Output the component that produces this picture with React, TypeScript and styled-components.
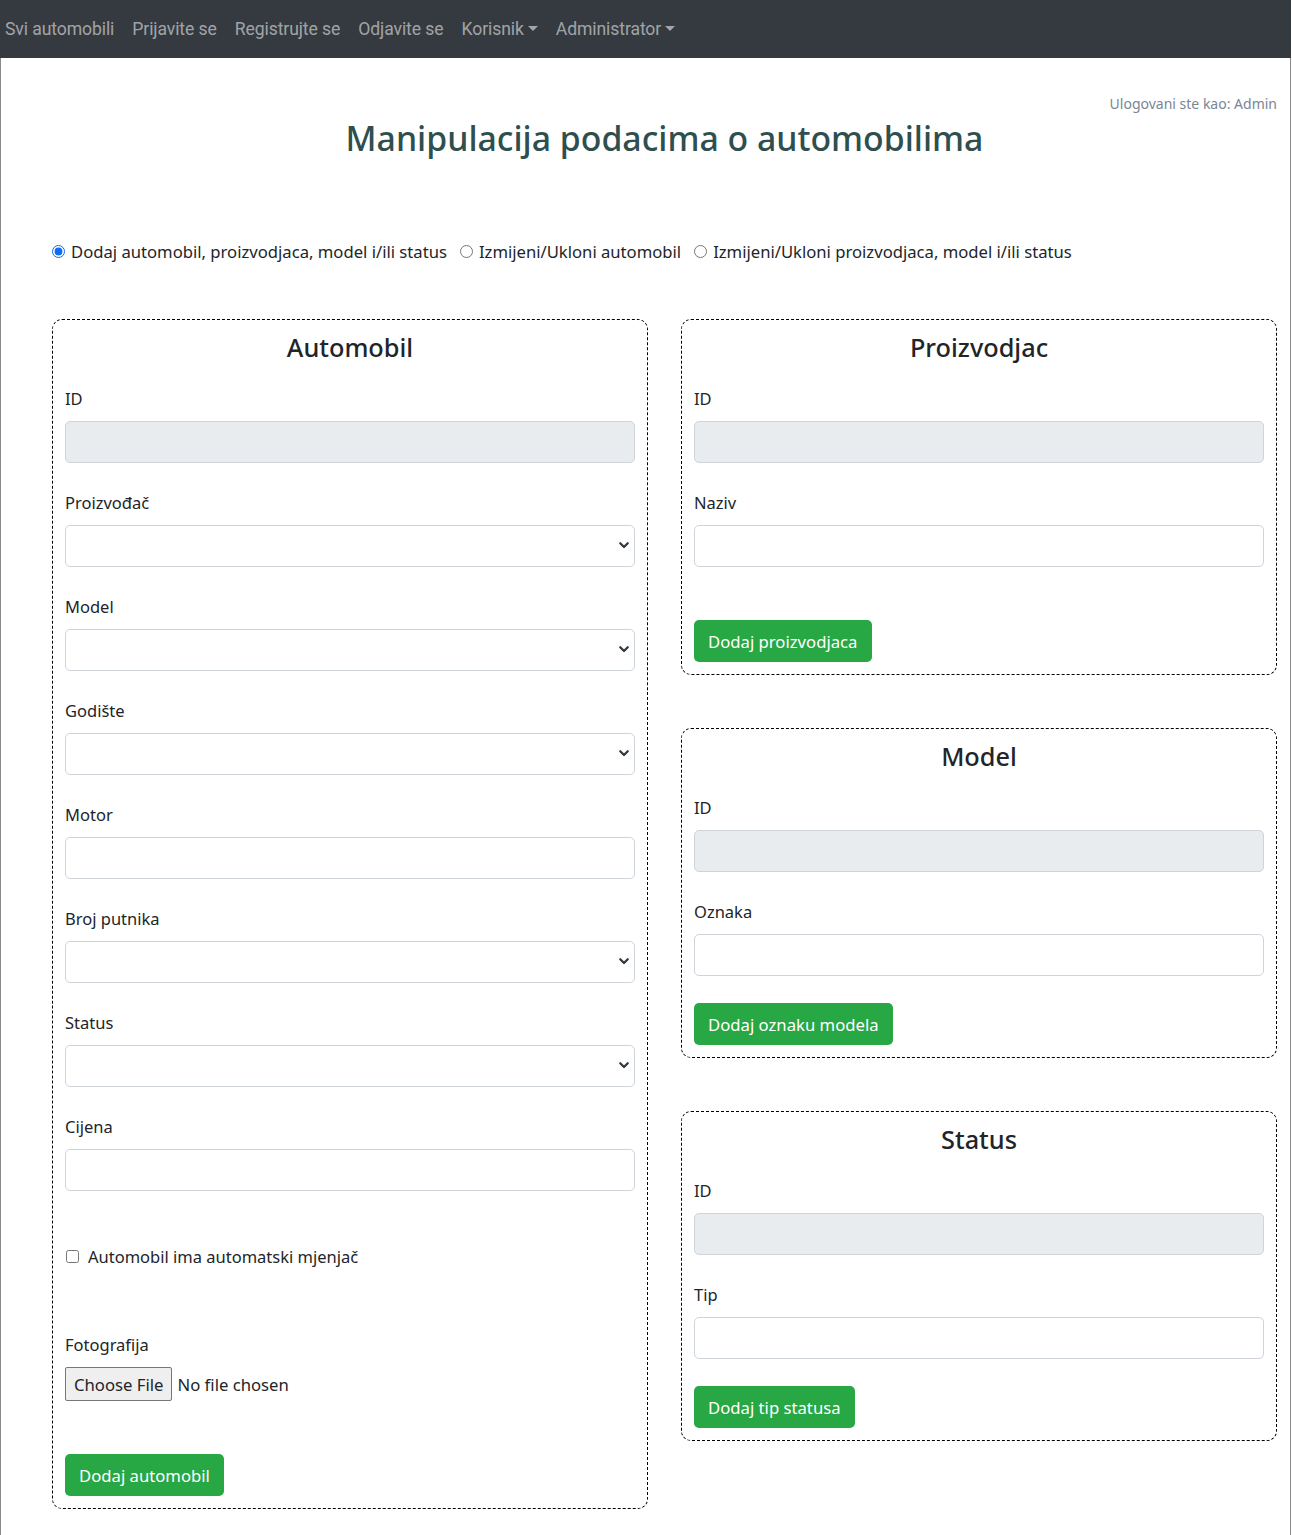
import React from "react";
import styled, { createGlobalStyle } from "styled-components";

const GlobalStyle = createGlobalStyle`
  * { box-sizing: border-box; }
  body {
    margin: 0;
    background: #fff;
    font-family: "Noto Sans", "Open Sans", sans-serif;
    color: #212529;
  }
`;

const Page = styled.div`
  width: 1291px;
  min-height: 1534px;
  display: flex;
  flex-direction: column;
  border-right: 1px solid #8a8a8a;
  border-bottom: 1px solid #8a8a8a;
`;

const NavBar = styled.nav`
  height: 58px;
  flex: none;
  background: #343a40;
  display: flex;
  align-items: center;
  gap: 18px;
  padding-left: 5px;
  margin-right: -1px;
`;

const NavLink = styled.a`
  font-family: Roboto, "Noto Sans", sans-serif;
  font-size: 17.6px;
  letter-spacing: -0.1px;
  color: rgba(255, 255, 255, 0.55);
  text-decoration: none;
  display: flex;
  align-items: center;
  gap: 4px;
`;

const Caret = styled.span`
  display: inline-block;
  width: 0;
  height: 0;
  border-left: 5px solid transparent;
  border-right: 5px solid transparent;
  border-top: 5px solid rgba(255, 255, 255, 0.55);
  margin-top: -2px;
`;

const Main = styled.main`
  flex: 1;
  border-left: 1px solid #8a8a8a;
  padding: 0 13px 26px 51px;
`;

const Header = styled.header`
  display: flex;
  flex-direction: column;
  padding-top: 35px;
`;

const LoggedAs = styled.div`
  align-self: flex-end;
  font-size: 14px;
  line-height: 22px;
  color: #7a8694;
`;

const Title = styled.h1`
  margin: 1px 0 0;
  text-align: center;
  font-size: 33.8px;
  font-weight: 500;
  line-height: 44px;
  color: #2f4f4f;
`;

const RadioRow = styled.div`
  display: flex;
  align-items: center;
  gap: 13px;
  margin-top: 77px;
  height: 28px;
`;

const RadioOption = styled.label`
  display: flex;
  align-items: center;
  gap: 6px;
  font-size: 16.65px;
  color: #212529;
`;

const Radio = styled.input`
  margin: 0;
  width: 13px;
  height: 13px;
  accent-color: #0b6cf5;
`;

const Columns = styled.div`
  display: grid;
  grid-template-columns: 1fr 1fr;
  column-gap: 33px;
  align-items: start;
  margin-top: 54px;
`;

const Stack = styled.div`
  display: flex;
  flex-direction: column;
  gap: 53px;
`;

const Card = styled.section`
  border: 1px dashed #000;
  border-radius: 10px;
  padding: 12px;
`;

const CardTitle = styled.h3`
  margin: 0 0 24px;
  text-align: center;
  font-size: 25.3px;
  font-weight: 500;
  line-height: 30px;
  color: #212529;
`;

const Field = styled.div`
  margin-bottom: 27px;
`;

const Label = styled.label`
  display: block;
  font-size: 16.5px;
  line-height: 26px;
  margin-bottom: 9px;
`;

const TextInput = styled.input`
  display: block;
  width: 100%;
  height: 42px;
  border: 1px solid #ced4da;
  border-radius: 5px;
  background: ${(p) => (p.disabled ? "#e9ecef" : "#fff")};
  font: inherit;
  padding: 6px 12px;
`;

const SelectWrap = styled.div`
  position: relative;
`;

const Select = styled.select`
  display: block;
  width: 100%;
  height: 42px;
  border: 1px solid #ced4da;
  border-radius: 5px;
  background: #fff;
  appearance: none;
  font: inherit;
  padding: 6px 12px;
`;

const Chevron = styled.svg`
  position: absolute;
  right: 5px;
  top: 16px;
  pointer-events: none;
`;

const CheckRow = styled.label`
  display: flex;
  align-items: center;
  gap: 9px;
  font-size: 16.5px;
  line-height: 26px;
  margin: 53px 0 62px;
`;

const Check = styled.input`
  margin: 0 0 2px 1px;
  width: 13px;
  height: 13px;
`;

const FileInput = styled.input`
  display: block;
  font-family: "Noto Sans", sans-serif;
  font-size: 16.7px;
  &::file-selector-button {
    font: inherit;
    height: 34px;
    padding: 0 8px;
    margin-right: 5px;
    border: 1px solid #767676;
    border-radius: 2px;
    background: #efefef;
    color: #212529;
  }
`;

const Button = styled.button<{ $gap?: number }>`
  display: inline-block;
  margin-top: ${(p) => p.$gap ?? 0}px;
  height: 42px;
  padding: 0 14px;
  border: none;
  border-radius: 5px;
  background: #28a745;
  color: #fff;
  font-family: "Noto Sans", sans-serif;
  font-size: 16.7px;
`;

const ChevronIcon = () => (
  <Chevron width="12" height="9" viewBox="0 0 16 12">
    <path d="M3 3l5 5 5-5" fill="none" stroke="#343a40" strokeWidth="3" strokeLinecap="round" strokeLinejoin="round" />
  </Chevron>
);

const InputField = ({ label, disabled }: { label: string; disabled?: boolean }) => (
  <Field>
    <Label>{label}</Label>
    <TextInput type="text" disabled={disabled} />
  </Field>
);

const SelectField = ({ label }: { label: string }) => (
  <Field>
    <Label>{label}</Label>
    <SelectWrap>
      <Select>
        <option></option>
      </Select>
      <ChevronIcon />
    </SelectWrap>
  </Field>
);

const navItems = ["Svi automobili", "Prijavite se", "Registrujte se", "Odjavite se"];

const App: React.FC = () => {
  return (
    <>
      <GlobalStyle />
      <Page>
        <NavBar>
          {navItems.map((n) => (
            <NavLink key={n} href="#">{n}</NavLink>
          ))}
          <NavLink href="#">Korisnik<Caret /></NavLink>
          <NavLink href="#">Administrator<Caret /></NavLink>
        </NavBar>
        <Main>
          <Header>
            <LoggedAs>Ulogovani ste kao: Admin</LoggedAs>
            <Title>Manipulacija podacima o automobilima</Title>
          </Header>

          <RadioRow>
            <RadioOption><Radio type="radio" name="mode" defaultChecked />Dodaj automobil, proizvodjaca, model i/ili status</RadioOption>
            <RadioOption><Radio type="radio" name="mode" />Izmijeni/Ukloni automobil</RadioOption>
            <RadioOption><Radio type="radio" name="mode" />Izmijeni/Ukloni proizvodjaca, model i/ili status</RadioOption>
          </RadioRow>

          <Columns>
            <Card>
              <CardTitle>Automobil</CardTitle>
              <InputField label="ID" disabled />
              <SelectField label="Proizvođač" />
              <SelectField label="Model" />
              <SelectField label="Godište" />
              <InputField label="Motor" />
              <SelectField label="Broj putnika" />
              <SelectField label="Status" />
              <InputField label="Cijena" />
              <CheckRow><Check type="checkbox" />Automobil ima automatski mjenjač</CheckRow>
              <Label>Fotografija</Label>
              <FileInput type="file" />
              <Button $gap={53}>Dodaj automobil</Button>
            </Card>

            <Stack>
              <Card>
                <CardTitle>Proizvodjac</CardTitle>
                <InputField label="ID" disabled />
                <InputField label="Naziv" />
                <Button $gap={26}>Dodaj proizvodjaca</Button>
              </Card>
              <Card>
                <CardTitle>Model</CardTitle>
                <InputField label="ID" disabled />
                <InputField label="Oznaka" />
                <Button>Dodaj oznaku modela</Button>
              </Card>
              <Card>
                <CardTitle>Status</CardTitle>
                <InputField label="ID" disabled />
                <InputField label="Tip" />
                <Button>Dodaj tip statusa</Button>
              </Card>
            </Stack>
          </Columns>
        </Main>
      </Page>
    </>
  );
};

export default App;
